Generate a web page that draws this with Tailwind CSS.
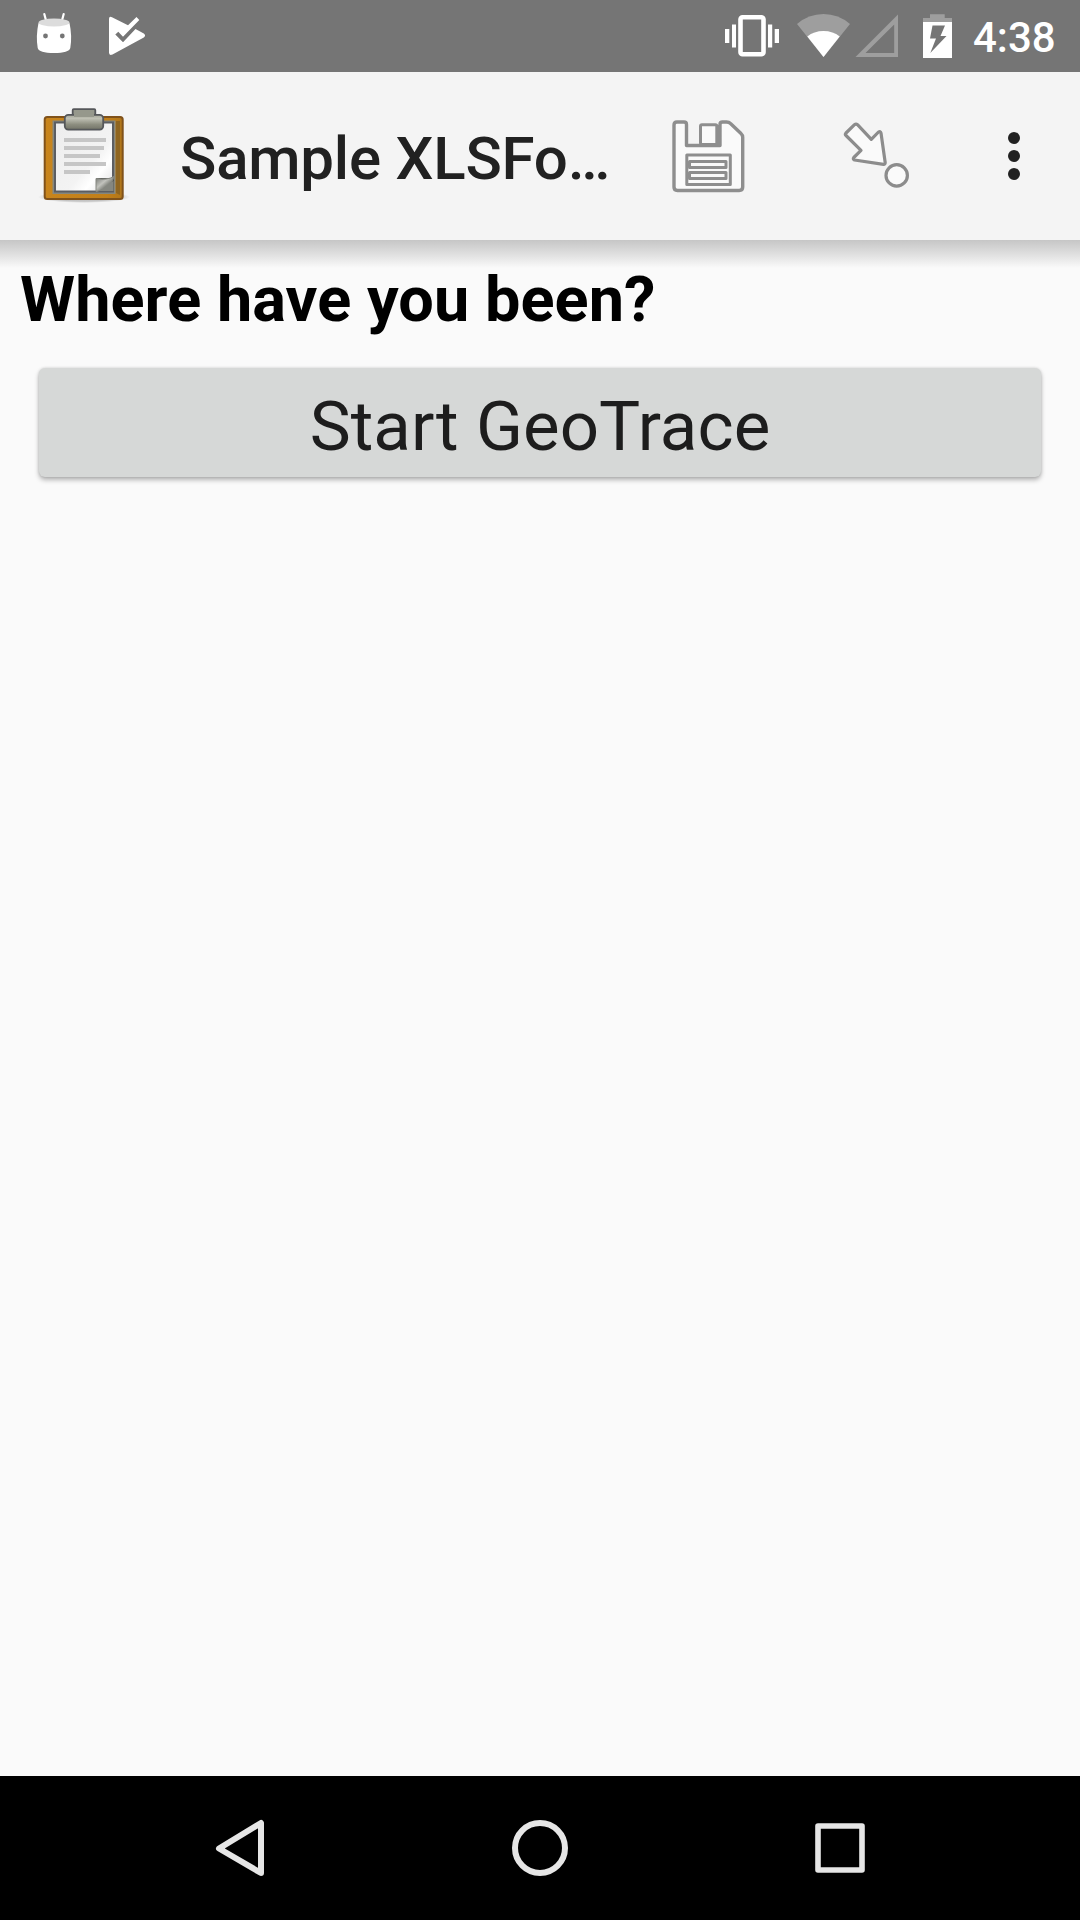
<!DOCTYPE html>
<html lang="en">
<head>
<meta charset="utf-8">
<title>Sample XLSForm</title>
<script src="https://cdn.jsdelivr.net/npm/@tailwindcss/browser@4"></script>
</head>
<body class="bg-[#fafafa]">
<div class="flex h-[1920px] w-[1080px] flex-col overflow-hidden bg-[#fafafa] font-['Roboto',sans-serif]">
  <!-- Status bar -->
  <header class="flex h-[72px] shrink-0 items-center bg-[#757575] pr-[24px] pl-[30px] text-white">
    <svg class="h-[72px] w-[120px]" viewBox="30 0 120 72" fill="#fff">
      <path d="M44.3 14l2.4 9M63.7 14l-2.4 9" stroke="#fff" stroke-width="2.2" stroke-linecap="round"/>
      <path d="M38.5 23Q54 28 69.5 23Q72.3 36 70.3 48Q69 53 54 53T37.700 48Q35.700 36 38.500 23Z"/>
      <ellipse cx="54" cy="22.500" rx="15.500" ry="4" fill="#dcdcdc"/>
      <circle cx="45.500" cy="36" r="2.400" fill="#757575"/><circle cx="62.300" cy="36" r="2.400" fill="#757575"/>
      <path d="M109 19Q109 16 112 17.200L128 25.300L136.500 17L139.300 20L123 36.800L118.300 31.700L115.300 34.500L123 42.300L135.500 29L143.800 33.500Q146.300 35.500 143.800 37.500L112.500 54.500Q109 56 109 52.500Z"/>
    </svg>
    <div class="flex-1"></div>
    <svg class="h-[72px] w-[240px]" viewBox="720 0 240 72" fill="#fff">
      <rect x="740.500" y="17.200" width="23" height="37" rx="2" fill="none" stroke="#fff" stroke-width="4.600"/>
      <path d="M732 24.500h4v23h-4zM725 29h4.300v14H725zM768 24.500h4.200v23H768zM774.700 29h4.300v14h-4.300z"/>
      <path d="M823.500 57L797 24Q808.500 14 823.500 14T850 24Z" fill="#9e9e9e"/>
      <path d="M823.500 57L807.300 36.500Q814 31 823.500 31T839.700 36.500Z"/>
      <path d="M855.500 57H898V14.500ZM865.500 53L894.200 24.500V53Z" fill="#9e9e9e" fill-rule="evenodd"/>
      <path d="M923 22v-4h7v-3.700h14.700V18h7.300v4z" fill="#9e9e9e"/>
      <path d="M923 22h29v36h-29zM932.500 25.500L930 38.500H936L930.300 53L946.500 36H940.500L945 25.500Z" fill-rule="evenodd"/>
    </svg>
    <span class="ml-[13px] w-[83px] pt-[3px] text-[42px] leading-none font-medium whitespace-nowrap">4:38</span>
  </header>

  <!-- App bar -->
  <div class="flex h-[168px] shrink-0 items-center bg-[#f4f4f4] pl-[30px] text-[#212121]">
    <svg class="h-[168px] w-[110px] shrink-0" viewBox="30 72 110 168">
      <defs>
        <linearGradient id="board" x1="0" x2="1"><stop offset="0" stop-color="#c8851d"/><stop offset=".8" stop-color="#c17f19"/><stop offset="1" stop-color="#b0761a"/></linearGradient>
        <linearGradient id="clip" x1="0" y1="0" x2="0" y2="1"><stop offset="0" stop-color="#a5a698"/><stop offset=".25" stop-color="#bfc0b4"/><stop offset=".65" stop-color="#8d8e80"/><stop offset="1" stop-color="#737468"/></linearGradient>
        <linearGradient id="paper" x1="0" y1="0" x2="1" y2="1"><stop offset="0" stop-color="#ededed"/><stop offset=".6" stop-color="#f3f3f3"/><stop offset=".75" stop-color="#fff"/><stop offset="1" stop-color="#ddd"/></linearGradient>
        <linearGradient id="curl" x1="0" y1="0" x2="1" y2="1"><stop offset="0" stop-color="#70726e"/><stop offset=".4" stop-color="#c2c3bd"/><stop offset=".6" stop-color="#858780"/></linearGradient>
        <radialGradient id="shade"><stop offset=".7" stop-color="#000" stop-opacity=".2"/><stop offset="1" stop-color="#000" stop-opacity="0"/></radialGradient>
      </defs>
      <ellipse cx="84" cy="197" rx="46" ry="6" fill="url(#shade)"/>
      <rect x="44.700" y="117" width="78" height="82" rx="2.500" fill="url(#board)" stroke="#80521a" stroke-width="2"/>
      <path d="M116 121h4v74l-4-2z" fill="#8f6520"/>
      <rect x="52.500" y="120.500" width="63" height="73.500" fill="#85877f"/>
      <rect x="55" y="122.500" width="58" height="69" fill="url(#paper)" stroke="#5c5e62" stroke-width="2"/>
      <path d="M64 138h42v4H64zM64 146h40v4H64zM64 154h36v4H64zM64 162h42v4H64zM64 170h26v4H64z" fill="#c6c6c6"/>
      <path d="M96 191V178H114V191Z" fill="#555753"/>
      <path d="M99 191L113.500 181V191Z" fill="#858780"/>
      <path d="M96 191.500V178.500Q107 180.500 114 176.500Q111 189 96 191.500Z" fill="url(#curl)" stroke="#858780"/>
      <rect x="72.700" y="109.200" width="22.600" height="9" rx="1" fill="#96988c" stroke="#55575a" stroke-width="1.800"/>
      <rect x="64.800" y="114.800" width="38.400" height="14.800" rx="3.500" fill="url(#clip)" stroke="#55575a" stroke-width="1.800"/>
      <path d="M74 115.500h20" stroke="#96988c" stroke-width="3"/>
    </svg>
    <h1 class="ml-[40px] w-[440px] pt-[6px] text-[60px] leading-none font-medium tracking-[-0.2px] whitespace-nowrap">Sample XLSFo…</h1>
    <svg class="ml-[40px] h-[168px] w-[95px] shrink-0" viewBox="660 72 95 168" fill="#fafafa" stroke="#8e8e8e" stroke-width="3.400" stroke-linejoin="round">
      <path d="M677 122h7q2.500 0 2.500 2.500v21H720v-21q0-2.500 2.500-2.500h4q2.500 0 4 1.500L741 133.500q1.700 1.500 1.700 4V187q0 3.500-3.500 3.500H677.500q-3.500 0-3.500-3.500V125q0-3 3-3z"/>
      <rect x="700.500" y="124.800" width="16.300" height="19.700" rx="1.500" stroke-width="3"/>
      <path d="M718.500 125v20" stroke-width="3"/>
      <path d="M686.800 155h43.500v29.500h-43.500z" stroke-width="3"/>
      <path d="M689.500 161.500h36.500v6h-36.500zM689.500 172.500h36.500v6h-36.500z" stroke-width="3"/>
    </svg>
    <svg class="ml-[85px] h-[168px] w-[70px] shrink-0" viewBox="840 72 70 168" fill="#fafafa" stroke="#8c8c8c" stroke-width="3.200" stroke-linejoin="round">
      <path d="M854.500 124.700q1.500-1.200 3 0L871.300 139.300L878.500 132Q880.500 130.800 881 133L885.200 162.500Q885.200 164.500 883.500 164.300L854.500 160Q852.500 159 853.800 157.500L861 150.300L846 135.500Q844.800 134.500 846 133Z"/>
      <circle cx="896.700" cy="175.400" r="10.700"/>
    </svg>
    <svg class="ml-[94px] h-[60px] w-[20px] shrink-0" viewBox="0 0 20 60" fill="#212121"><circle cx="10" cy="12" r="6"/><circle cx="10" cy="30" r="6"/><circle cx="10" cy="48" r="6"/></svg>
  </div>

  <!-- Question -->
  <main class="flex flex-1 flex-col">
    <div class="h-[28px] shrink-0 bg-linear-to-b from-[#c6c6c6] via-[#dfdfdf] to-[#fafafa]"></div>
    <h2 class="pl-[20px] text-[63px] leading-[64px] font-bold tracking-[0.06px] text-black">Where have you been?</h2>
    <button class="mx-[39px] mt-[36px] flex h-[109px] items-center justify-center rounded-[6px] bg-[#d6d8d7] pt-[7px] text-[69px] leading-none tracking-[0.07px] text-[#1d1d1d] shadow-[0_3px_5px_rgba(0,0,0,0.28),0_0_3px_rgba(0,0,0,0.15)]">Start GeoTrace</button>
  </main>

  <!-- Navigation bar -->
  <nav class="flex h-[144px] shrink-0 items-center justify-center gap-[240px] bg-black">
    <svg class="size-[60px]" viewBox="0 0 60 60" fill="none" stroke="#e6e6e6" stroke-width="6" stroke-linejoin="round"><path d="M51 5V55L9 30.500Z"/></svg>
    <svg class="size-[60px]" viewBox="0 0 60 60" fill="none" stroke="#e6e6e6" stroke-width="6"><circle cx="30" cy="30" r="25"/></svg>
    <svg class="size-[60px]" viewBox="0 0 60 60" fill="none" stroke="#e6e6e6" stroke-width="5.600" stroke-linejoin="round"><path d="M8 8h44v44H8z"/></svg>
  </nav>
</div>
</body>
</html>
